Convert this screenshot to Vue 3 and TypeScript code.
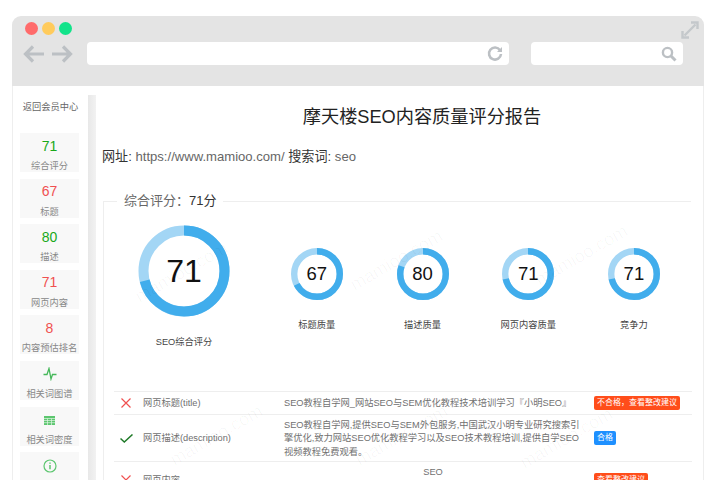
<script setup lang="ts">
interface Card { value?: string; tone?: string; icon?: string; label?: string }
const cards: Card[] = [
  { value: '71', tone: 'good', label: '综合评分' },
  { value: '67', tone: 'bad', label: '标题' },
  { value: '80', tone: 'good', label: '描述' },
  { value: '71', tone: 'bad', label: '网页内容' },
  { value: '8', tone: 'bad', label: '内容预估排名' },
  { icon: 'pulse', label: '相关词图谱' },
  { icon: 'grid', label: '相关词密度' },
  { icon: 'info' },
]
const gauges = [
  { v: 67, label: '标题质量' },
  { v: 80, label: '描述质量' },
  { v: 71, label: '网页内容质量' },
  { v: 71, label: '竞争力' },
]
const marks = [
  { x: 130, y: 262 }, { x: 345, y: 250 }, { x: 530, y: 245 },
  { x: 165, y: 425 }, { x: 350, y: 425 }, { x: 515, y: 428 },
]
function dash(v: number, r: number): string {
  const c = 2 * Math.PI * r
  return `${(c * v) / 100} ${c}`
}
</script>

<template>
  <div class="page">
    <div class="frame">
      <header class="chrome">
        <div class="dots">
          <span class="dot red"></span><span class="dot yellow"></span><span class="dot green"></span>
        </div>
        <div class="toolbar">
          <svg class="arrows" width="50" height="20" viewBox="0 0 50 20" fill="none" stroke="#bcc0c4" stroke-width="3.2">
            <path d="M21 10H3M10 2.5 2.5 10 10 17.5" />
            <path d="M29 10H47M40 2.5 47.5 10 40 17.5" />
          </svg>
          <div class="field address">
            <svg width="16" height="16" viewBox="0 0 16 16" fill="none">
              <path d="M13 4.2A6 6 0 1 0 14 8" stroke="#bcc0c4" stroke-width="2.6" />
              <path d="M10 6h5V1z" fill="#bcc0c4" />
            </svg>
          </div>
          <div class="field search">
            <svg width="16" height="16" viewBox="0 0 16 16" fill="none" stroke="#bcc0c4">
              <circle cx="6.5" cy="6.5" r="4.6" stroke-width="2.4" />
              <path d="M10 10l4.5 4.5" stroke-width="3" />
            </svg>
          </div>
        </div>
        <svg class="expand" width="18" height="18" viewBox="0 0 18 18" fill="none" stroke="#c4c8cb" stroke-width="2.4">
          <path d="M3.5 14.5 14.5 3.5" />
          <path d="M10 1.5h6.5V8" />
          <path d="M1.5 10v6.5H8" />
        </svg>
      </header>

      <div class="body">
        <aside class="sidebar">
          <div class="back">返回会员中心</div>
          <div class="cards">
            <div v-for="(c, i) in cards" :key="i" class="card">
              <div class="card-top">
                <span v-if="c.value" class="num" :class="c.tone">{{ c.value }}</span>
                <svg v-else-if="c.icon === 'pulse'" width="14" height="14" viewBox="0 0 14 14" fill="none" stroke="#45b85a" stroke-width="1.3">
                  <path d="M0.5 7.5H4L6 1.5 8 12 9.5 7.5H13.5" />
                </svg>
                <svg v-else-if="c.icon === 'grid'" width="11" height="9" viewBox="0 0 11 9">
                  <rect width="11" height="9" fill="#5cc66f" />
                  <path d="M0 2.5H11M0 4.5H11M0 6.7H11M3.5 2.5V9M7.5 2.5V9" stroke="#dff3e3" stroke-width="0.7" />
                </svg>
                <svg v-else width="14" height="14" viewBox="0 0 14 14" fill="none" stroke="#5cc66f">
                  <circle cx="7" cy="7" r="6" stroke-width="1.2" />
                  <path d="M7 6v4.2" stroke-width="1.5" />
                  <path d="M7 3.4v1.4" stroke-width="1.5" />
                </svg>
              </div>
              <div v-if="c.label" class="card-label">{{ c.label }}</div>
            </div>
          </div>
        </aside>
        <div class="scrollbar"></div>

        <main class="main">
          <h1 class="title">摩天楼SEO内容质量评分报告</h1>
          <p class="meta">网址: <span class="muted">https://www.mamioo.com/</span> 搜索词: <span class="muted">seo</span></p>

          <fieldset class="report">
            <legend>综合评分：<b>71分</b></legend>
            <div class="gauges">
              <div class="gauge big">
                <div class="ring">
                  <svg width="92" height="92" viewBox="0 0 92 92" fill="none">
                    <circle cx="46" cy="46" r="40.5" stroke="#a3d6f5" stroke-width="10" />
                    <circle cx="46" cy="46" r="40.5" stroke="#41adec" stroke-width="10" :stroke-dasharray="dash(71, 40.5)" transform="rotate(-90 46 46)" />
                  </svg>
                  <span class="ring-num">71</span>
                </div>
                <div class="gauge-label">SEO综合评分</div>
              </div>
              <div v-for="g in gauges" :key="g.label" class="gauge small">
                <div class="ring">
                  <svg width="52" height="52" viewBox="0 0 52 52" fill="none">
                    <circle cx="26" cy="26" r="22.8" stroke="#a3d6f5" stroke-width="6.4" />
                    <circle cx="26" cy="26" r="22.8" stroke="#41adec" stroke-width="6.4" :stroke-dasharray="dash(g.v, 22.8)" transform="rotate(-90 26 26)" />
                  </svg>
                  <span class="ring-num">{{ g.v }}</span>
                </div>
                <div class="gauge-label">{{ g.label }}</div>
              </div>
            </div>

            <div class="table">
              <div class="row">
                <svg class="state" width="10" height="10" viewBox="0 0 10 10" fill="none" stroke="#f05050" stroke-width="1.2"><path d="M0.5 0.5l9 9M9.5 0.5l-9 9" /></svg>
                <div class="name">网页标题(title)</div>
                <div class="content">SEO教程自学网_网站SEO与SEM优化教程技术培训学习『小明SEO』</div>
                <div class="action"><span class="badge warn">不合格，查看整改建议</span></div>
              </div>
              <div class="row">
                <svg class="state check" width="13" height="9" viewBox="0 0 13 9" fill="none" stroke="#1f7a28" stroke-width="1.5"><path d="M0.5 4.5 4.3 8 12.500 0.5" /></svg>
                <div class="name">网页描述(description)</div>
                <div class="content">SEO教程自学网,提供SEO与SEM外包服务,中国武汉小明专业研究搜索引擎优化,致力网站SEO优化教程学习以及SEO技术教程培训,提供自学SEO视频教程免费观看。</div>
                <div class="action"><span class="badge ok">合格</span></div>
              </div>
              <div class="row tall">
                <svg class="state" width="10" height="10" viewBox="0 0 10 10" fill="none" stroke="#f05050" stroke-width="1.2"><path d="M0.5 0.5l9 9M9.5 0.5l-9 9" /></svg>
                <div class="name">网页内容</div>
                <div class="content center">SEO</div>
                <div class="action"><span class="badge warn">查看整改建议</span></div>
              </div>
            </div>
          </fieldset>
        </main>
      </div>
    </div>
    <span v-for="m in marks" :key="m.x + '-' + m.y" class="watermark" :style="{ left: m.x + 'px', top: m.y + 'px' }">mamioo.com</span>
  </div>
</template>

<style>
html, body { margin: 0; background: #fff; overflow: hidden; }
</style>

<style scoped>
.page {
  position: relative;
  box-sizing: border-box;
  width: 720px;
  height: 480px;
  padding: 16px 16px 0 12px;
  overflow: hidden;
  font-family: "Liberation Sans", "Noto Sans CJK SC", sans-serif;
  color: #333;
}
.frame { display: flex; flex-direction: column; height: 100%; }
.chrome {
  position: relative;
  flex: none;
  box-sizing: border-box;
  height: 70px;
  padding: 6px 0 0 13px;
  background: #e4e4e4;
  border-radius: 9px 9px 0 0;
}
.dots { display: flex; gap: 4px; }
.dot { width: 13px; height: 13px; border-radius: 50%; }
.red { background: #ff6b6b; }
.yellow { background: #ffcb5c; }
.green { background: #12e38a; }
.toolbar { display: flex; align-items: center; margin-top: 7px; }
.arrows { margin-left: -2px; margin-right: 14px; }
.field {
  display: flex;
  align-items: center;
  justify-content: flex-end;
  box-sizing: border-box;
  height: 23px;
  padding-right: 6px;
  background: #fff;
  border-radius: 4px;
}
.address { width: 422px; }
.search { width: 152px; margin-left: 22px; }
.expand { position: absolute; top: 5px; right: 5px; }

.body {
  flex: 1;
  display: flex;
  min-height: 0;
  border-left: 1px solid #eee;
  border-right: 1px solid #eee;
}
.sidebar { flex: none; box-sizing: border-box; width: 75px; padding: 14px 7px 0 7px; }
.back { text-align: center; font-size: 9.25px; line-height: 14px; color: #666; white-space: nowrap; }
.cards { display: flex; flex-direction: column; gap: 6.6px; margin-top: 19px; }
.card { flex: none; width: 59px; height: 39px; background: #f8f8f8; text-align: center; }
.card-top { display: flex; align-items: center; justify-content: center; height: 27px; }
.num { font-size: 14px; margin-bottom: 2px; }
.good { color: #1aa81a; }
.bad { color: #f05050; }
.card-label { font-size: 9.25px; line-height: 12px; color: #888; white-space: nowrap; }
.scrollbar { flex: none; width: 8px; margin-top: 9px; background: linear-gradient(90deg, #e8e8e8, #f2f2f2); }

.main { flex: 1; min-width: 0; box-sizing: border-box; padding-left: 6px; overflow: hidden; }
.title {
  width: 640px;
  margin: 19px 0 0;
  font-size: 18.2px;
  font-weight: 400;
  line-height: 24px;
  text-align: center;
  color: #222;
  white-space: nowrap;
}
.meta { margin: 18px 0 0; font-size: 13.1px; line-height: 20px; color: #333; white-space: nowrap; }
.muted { color: #666; }
.report {
  width: 588px;
  box-sizing: border-box;
  margin: 25px 0 0 1px;
  padding: 0 0 0 10px;
  border: 0;
  border-top: 1px solid #eee;
  border-left: 1px solid #eee;
  min-width: 0;
}
legend { margin-left: 3px; padding: 0 7px; font-size: 13px; line-height: 18px; color: #666; }
legend b { font-weight: 400; color: #333; }
.gauges { display: flex; margin-top: 15px; margin-left: -10px; height: 166px; }
.gauge { flex: none; display: flex; flex-direction: column; align-items: center; }
.big { width: 160px; }
.small { width: 105.7px; padding-top: 23px; }
.ring { position: relative; display: flex; align-items: center; justify-content: center; }
.ring svg { display: block; }
.ring-num { position: absolute; font-size: 18.5px; color: #111; }
.big .ring-num { font-size: 32px; }
.gauge-label { font-size: 9.25px; line-height: 14px; color: #444; white-space: nowrap; }
.big .gauge-label { margin-top: 18px; }
.small .gauge-label { margin-top: 18px; }

.table { width: 578px; }
.row {
  display: flex;
  align-items: center;
  border-top: 1px solid #eee;
  font-size: 9.25px;
  line-height: 13.4px;
  color: #707070;
  min-height: 22px;
}
.state { flex: none; margin-left: 7px; margin-right: 12px; }
.check { margin-left: 6px; margin-right: 10px; }
.name { flex: none; width: 141px; padding-top: 1px; white-space: nowrap; }
.content { flex: none; width: 298px; margin-right: 12px; padding: 4px 0 2px; box-sizing: border-box; }
.action { flex: 1; display: flex; }
.badge { padding: 0 3px; height: 14.4px; line-height: 14.4px; font-size: 8px; border-radius: 2px; color: #fff; white-space: nowrap; }
.warn { background: #ff4d1a; }
.ok { background: #1e90ff; }
.tall { height: 36px; }
.center { align-self: flex-start; text-align: center; }

.watermark {
  position: absolute;
  font-size: 18px;
  color: rgba(0, 0, 0, 0.03);
  transform: rotate(-30deg);
  pointer-events: none;
  white-space: nowrap;
}
</style>
